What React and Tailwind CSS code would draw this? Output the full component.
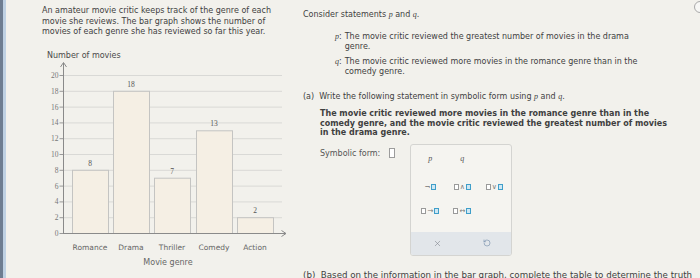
import React from 'react'
import { X, RotateCcw } from 'lucide-react'

const bars = [
  { name: 'Romance', value: 8, x: 72 },
  { name: 'Drama', value: 18, x: 113 },
  { name: 'Thriller', value: 7, x: 154 },
  { name: 'Comedy', value: 13, x: 196 },
  { name: 'Action', value: 2, x: 237 },
]

const yOf = (v) => 233 - v * 7.9
const ticks = [0, 2, 4, 6, 8, 10, 12, 14, 16, 18, 20]

const Var = ({ children }) => (
  <span className="italic" style={{ fontFamily: '"Liberation Serif", serif' }}>{children}</span>
)

const Box = ({ blue }) => (
  <span
    className={`inline-block w-[5px] h-[6px] border ${blue ? 'border-[#3f9ec9] bg-[#cfe7f3]' : 'border-[#9a9a9a] bg-white'}`}
  />
)

const Chart = () => (
  <svg width="284" height="238" viewBox="6 40 284 238" className="block mt-[2px]">
    <text x="47" y="57.5" fontSize="8" fill="#4a4a4a" fontFamily="DejaVu Sans, sans-serif">Number of movies</text>
    {ticks.filter((t) => t > 0).map((t) => (
      <line key={t} x1="63" x2="282" y1={yOf(t) + 0.5} y2={yOf(t) + 0.5} stroke="#d9d9d6" strokeWidth="1" />
    ))}
    {bars.map((b) => (
      <g key={b.name}>
        <rect x={b.x + 0.5} y={yOf(b.value) + 0.5} width="36" height={b.value * 7.9} fill="#f5efe4" stroke="#c4c4c2" />
        <text x={b.x + 18} y={yOf(b.value) - 4} fontSize="7.5" fill="#555" textAnchor="middle" fontFamily="Liberation Serif, serif">{b.value}</text>
        <text x={b.x + 18} y="249.5" fontSize="7.5" fill="#666" textAnchor="middle" fontFamily="DejaVu Sans, sans-serif">{b.name}</text>
      </g>
    ))}
    {ticks.map((t) => (
      <g key={t}>
        <line x1="59.5" x2="63" y1={yOf(t) + 0.5} y2={yOf(t) + 0.5} stroke="#999" />
        <text x="58.5" y={yOf(t) + 3} fontSize="7.5" fill="#777" textAnchor="end" fontFamily="Liberation Serif, serif">{t}</text>
      </g>
    ))}
    <line x1="63.5" x2="63.5" y1="233.5" y2="63" stroke="#8a8a8a" />
    <polyline points="60.5,67 63.5,62.5 66.5,67" fill="none" stroke="#8a8a8a" />
    <line x1="63" x2="286" y1="233.5" y2="233.5" stroke="#8a8a8a" />
    <polyline points="281.5,230.5 286,233.5 281.5,236.5" fill="none" stroke="#8a8a8a" />
    <text x="168" y="264.5" fontSize="8" fill="#666" textAnchor="middle" fontFamily="DejaVu Sans, sans-serif">Movie genre</text>
  </svg>
)

const Palette = () => (
  <div className="w-[102px] h-[112px] rounded-[3px] border border-[#d4d4d1] bg-[#f5f4f0] flex flex-col overflow-hidden">
    <div className="flex-1 pl-[3px] pt-[9px] grid grid-cols-[32px_32px_32px] auto-rows-[26px] text-[7px] text-[#777] items-start">
      <div className="text-center text-[8px] text-[#555]"><Var>p</Var></div>
      <div className="text-center text-[8px] text-[#555]"><Var>q</Var></div>
      <div />
      <div className="flex items-center justify-center gap-[1px] pt-[2px]"><span>¬</span><Box blue /></div>
      <div className="flex items-center justify-center gap-[1px] pt-[2px]"><Box /><span>∧</span><Box blue /></div>
      <div className="flex items-center justify-center gap-[1px] pt-[2px]"><Box /><span>∨</span><Box blue /></div>
      <div className="flex items-center justify-center gap-[1px]"><Box /><span>→</span><Box blue /></div>
      <div className="flex items-center justify-center gap-[1px]"><Box /><span>↔</span><Box blue /></div>
    </div>
    <div className="h-[25px] bg-[#e2e6ea] flex items-center">
      <div className="w-[50px] flex justify-center pl-[3px]"><X size={9} strokeWidth={1.5} color="#7c8189" /></div>
      <div className="w-[50px] flex justify-center pl-[2px]"><RotateCcw size={8} strokeWidth={2} color="#7a92ad" /></div>
    </div>
  </div>
)

export default function App() {
  return (
    <div
      className="relative w-[700px] h-[278px] overflow-hidden bg-[#f2f1ec] flex text-[#3f3f3f]"
      style={{ fontFamily: '"DejaVu Sans", Verdana, sans-serif' }}
    >
      <div className="w-[3px] bg-[#6e7d91]" />
      <div className="w-[3px] bg-[#bfd1e3]" />

      <div className="w-[284px] flex flex-col">
        <p className="ml-[36px] mt-[6px] w-[245px] text-[8px] leading-[10.5px]">
          An amateur movie critic keeps track of the genre of each movie she reviews. The bar graph shows the number of movies of each genre she has reviewed so far this year.
        </p>
        <Chart />
      </div>

      <div className="flex-1 pl-[13px] pt-[10px] flex flex-col text-[8px] leading-[10px]">
        <p>Consider statements <Var>p</Var> and <Var>q</Var>.</p>

        <div className="mt-[12px] ml-[32px] flex">
          <span className="mr-[3px]"><Var>p</Var>:</span>
          <span className="w-[297px]">The movie critic reviewed the greatest number of movies in the drama genre.</span>
        </div>
        <div className="mt-[5px] ml-[32px] flex leading-[9.5px]">
          <span className="mr-[3px]"><Var>q</Var>:</span>
          <span className="w-[297px]">The movie critic reviewed more movies in the romance genre than in the comedy genre.</span>
        </div>

        <p className="mt-[16px]">(a)&nbsp; Write the following statement in symbolic form using <Var>p</Var> and <Var>q</Var>.</p>

        <p className="mt-[7px] ml-[17px] w-[358px] font-bold leading-[9.5px]">
          The movie critic reviewed more movies in the romance genre than in the comedy genre, and the movie critic reviewed the greatest number of movies in the drama genre.
        </p>

        <div className="mt-[6px] ml-[17px] flex items-start">
          <span className="pt-[5px] text-[#555]">Symbolic form:</span>
          <span className="ml-[9px] mt-[4px] w-[6px] h-[10px] border border-[#9c9c9c] bg-white" />
          <div className="ml-[15px]">
            <Palette />
          </div>
        </div>

        <p className="mt-[14px] whitespace-nowrap text-[8.7px]">(b)&nbsp; Based on the information in the bar graph, complete the table to determine the truth</p>
      </div>

      <div className="absolute top-[1px] right-[-6px] w-[12px] h-[12px] rounded-full border border-[#a9a9a9] bg-[#f7f7f5]" />
    </div>
  )
}
